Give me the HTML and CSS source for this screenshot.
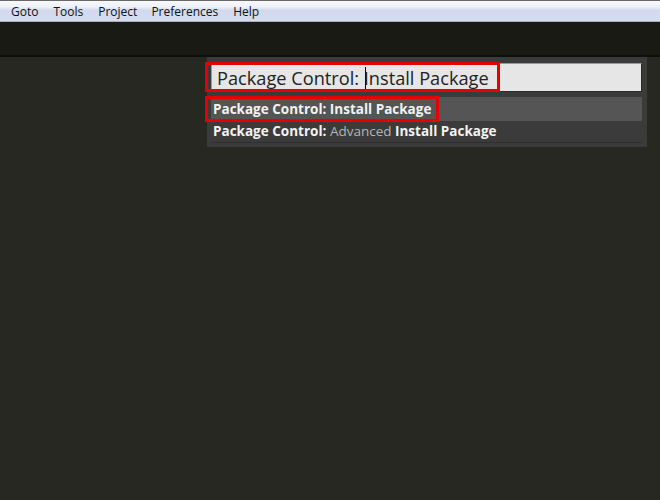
FILE: index.html
```html
<!DOCTYPE html>
<html>
<head>
<meta charset="utf-8">
<link rel="stylesheet" href="styles.css">
</head>
<body>
<div class="app">
  <div class="menubar">
    <span class="menu-item">Goto</span>
    <span class="menu-item">Tools</span>
    <span class="menu-item">Project</span>
    <span class="menu-item">Preferences</span>
    <span class="menu-item">Help</span>
  </div>
  <div class="toolbar"></div>
  <div class="editor">
    <div class="palette">
      <div class="input-wrap">
        <div class="input"><span>Package Control: </span><span class="caret"></span><span>Install Package</span></div>
      </div>
      <div class="results">
        <div class="row selected"><span class="label"><b>Package Control: Install Package</b></span></div>
        <div class="row"><span class="label"><b>Package Control:</b> <span class="dim">Advanced</span> <b>Install Package</b></span></div>
      </div>
    </div>
    <div class="mark mark-input"></div>
    <div class="mark mark-row"></div>
  </div>
</div>
</body>
</html>
```
FILE: styles.css
```css
html, body {
  margin: 0;
  padding: 0;
  width: 660px;
  height: 500px;
  overflow: hidden;
  background: #272822;
}
.app {
  display: flex;
  flex-direction: column;
  height: 500px;
}
.menubar {
  height: 20px;
  border-top: 1px solid #6a6a6a;
  border-bottom: 1px solid #a9b0c2;
  background: linear-gradient(#f7f8fb 0%, #eef1f8 30%, #d3daee 45%, #d5dcef 100%);
  display: flex;
  align-items: center;
  padding-left: 11px;
  font-family: "Open Sans", "Noto Sans", sans-serif;
  font-size: 12px;
  color: #111;
}
.menu-item { margin-right: 15px; }
.menu-item:nth-child(3) { margin-right: 14px; }
.toolbar {
  height: 33px;
  background: #1a1a15;
  border-bottom: 2px solid #0f0f0c;
}
.editor {
  flex: 1;
  position: relative;
  background: #272822;
}
.palette {
  position: absolute;
  left: 207px;
  top: 0;
  width: 440px;
  height: 90px;
  box-sizing: border-box;
  background: #3b3b3b;
  padding: 6px 5px 0 4px;
  display: flex;
  flex-direction: column;
  font-family: "Open Sans", "Noto Sans", sans-serif;
}
.input-wrap {
  height: 29px;
  box-sizing: border-box;
  background: #e6e6e6;
  border: 1px solid #2a2a2a;
  border-top-color: #9a9a9a;
  border-left-color: #9a9a9a;
  display: flex;
  align-items: center;
  padding-left: 5px;
}
.input {
  font-size: 18.2px;
  color: #222;
  white-space: pre;
  display: flex;
  align-items: center;
}
.caret {
  display: inline-block;
  width: 1px;
  height: 22px;
  background: #000;
  margin-left: 1px;
  margin-right: -2px;
}
.results {
  margin-top: 5px;
  display: flex;
  flex-direction: column;
}
.row {
  height: 23px;
  padding-left: 2px;
  display: flex;
  align-items: center;
  font-size: 13.5px;
  color: #f2f2f2;
  border-bottom: 1px solid transparent;
}
.label { white-space: pre; }
.row b { font-weight: 700; }
.row.selected { background: #555555; }
.row + .row {
  border-bottom-color: #2f2f2f;
  height: 22px;
  box-sizing: border-box;
  padding-bottom: 1px;
}
.dim { color: #b4b4b4; font-weight: 400; }
.mark {
  position: absolute;
  border: 3px solid #e60000;
  box-sizing: border-box;
}
.mark-input { left: 205px; top: 5px; width: 295px; height: 30px; }
.mark-row { left: 205px; top: 39px; width: 234px; height: 26px; }
```
